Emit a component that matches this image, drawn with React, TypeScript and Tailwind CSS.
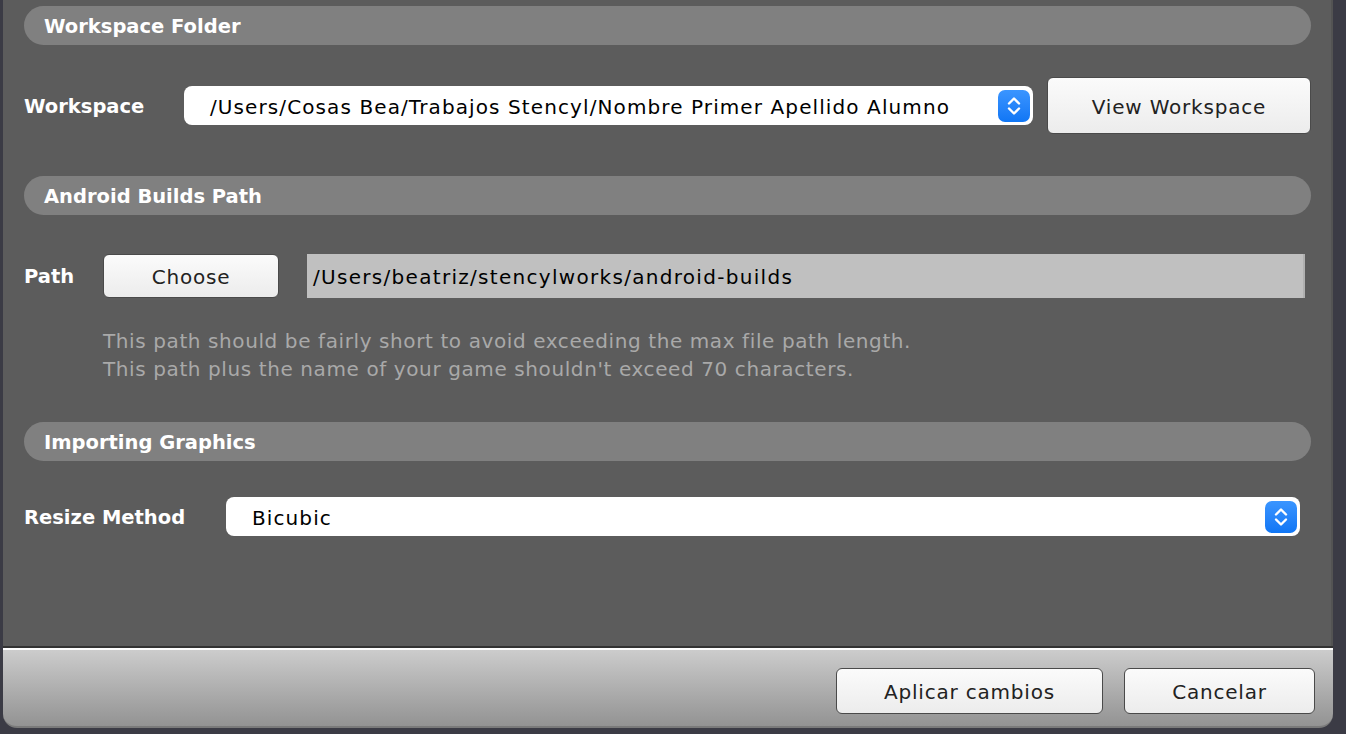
import React from "react";

const font = { fontFamily: '"DejaVu Sans", "Liberation Sans", sans-serif' };

const SectionHeader = ({ title }: { title: string }) => (
  <div className="h-[39px] rounded-full bg-[#808080] flex items-center pl-5 pt-[3px] text-white font-bold text-[19.5px]">
    {title}
  </div>
);

const Stepper = () => (
  <div className="w-[32px] h-[32px] rounded-[7px] bg-gradient-to-b from-[#3a95ff] to-[#0f76f5] flex items-center justify-center">
    <svg width="16" height="22" viewBox="0 0 16 22" fill="none" stroke="white" strokeWidth="2.4" strokeLinecap="round" strokeLinejoin="round">
      <path d="M3 8.5 L8 3.5 L13 8.5" />
      <path d="M3 13.5 L8 18.5 L13 13.5" />
    </svg>
  </div>
);

const Select = ({ value, className }: { value: string; className: string }) => (
  <div className={"h-[39px] bg-white rounded-[8px] flex items-center justify-between pl-[26px] pr-[3px] text-[20px] tracking-[1.1px] text-black " + className}>
    <span className="pt-[2px]">{value}</span>
    <Stepper />
  </div>
);

const MacButton = ({ label, className }: { label: string; className: string }) => (
  <button className={"rounded-[6px] border border-[#4a4a4a] bg-gradient-to-b from-[#fbfbfb] to-[#ececec] text-[#222] text-[20px] tracking-[0.8px] flex items-center justify-center pt-[2px] " + className}>
    {label}
  </button>
);

export default function App() {
  return (
    <div className="w-[1346px] h-[734px] bg-[#3b3b45] overflow-hidden" style={font}>
      <div className="ml-[3px] w-[1330px] h-[728px] flex flex-col">
        <div className="flex-1 bg-[#5c5c5c] pl-[21px] pr-[20px] pt-[6px] border-r-2 border-[#535353]">
          <SectionHeader title="Workspace Folder" />
          <div className="flex items-center mt-[32px] h-[57px]">
            <div className="w-[160px] text-white font-bold text-[19.5px] pt-[3px]">Workspace</div>
            <Select value="/Users/Cosas Bea/Trabajos Stencyl/Nombre Primer Apellido Alumno" className="w-[849px]" />
            <MacButton label="View Workspace" className="ml-[14px] w-[264px] h-[57px]" />
          </div>
          <div className="mt-[42px]">
            <SectionHeader title="Android Builds Path" />
          </div>
          <div className="flex items-center mt-[39px] h-[44px]">
            <div className="w-[79px] text-white font-bold text-[19.5px] pt-[2px]">Path</div>
            <MacButton label="Choose" className="w-[176px] h-[44px]" />
            <div className="ml-[28px] w-[998px] h-[44px] bg-[#c0c0c0] border-r-2 border-[#b0b0b0] flex items-center pl-[6px] pt-[2px] text-[20px] tracking-[1.3px] text-black">
              /Users/beatriz/stencylworks/android-builds
            </div>
          </div>
          <div className="ml-[79px] mt-[29px] text-[#a9a9a9] text-[20px] tracking-[0.6px] leading-[28px]">
            <div>This path should be fairly short to avoid exceeding the max file path length.</div>
            <div>This path plus the name of your game shouldn't exceed 70 characters.</div>
          </div>
          <div className="mt-[39px]">
            <SectionHeader title="Importing Graphics" />
          </div>
          <div className="flex items-center mt-[36px]">
            <div className="w-[202px] text-white font-bold text-[19.5px] pt-[3px]">Resize Method</div>
            <Select value="Bicubic" className="w-[1074px]" />
          </div>
        </div>
        <div className="h-[2px] bg-[#333333]" />
        <div className="h-[2px] bg-white" />
        <div className="h-[78px] bg-gradient-to-b from-[#cccccc] to-[#939393] rounded-b-[14px] border-b-2 border-[#7a7a7a] flex items-start pt-[18px] justify-end pr-[18px] gap-[21px]">
          <MacButton label="Aplicar cambios" className="w-[267px] h-[46px]" />
          <MacButton label="Cancelar" className="w-[191px] h-[46px]" />
        </div>
      </div>
    </div>
  );
}
